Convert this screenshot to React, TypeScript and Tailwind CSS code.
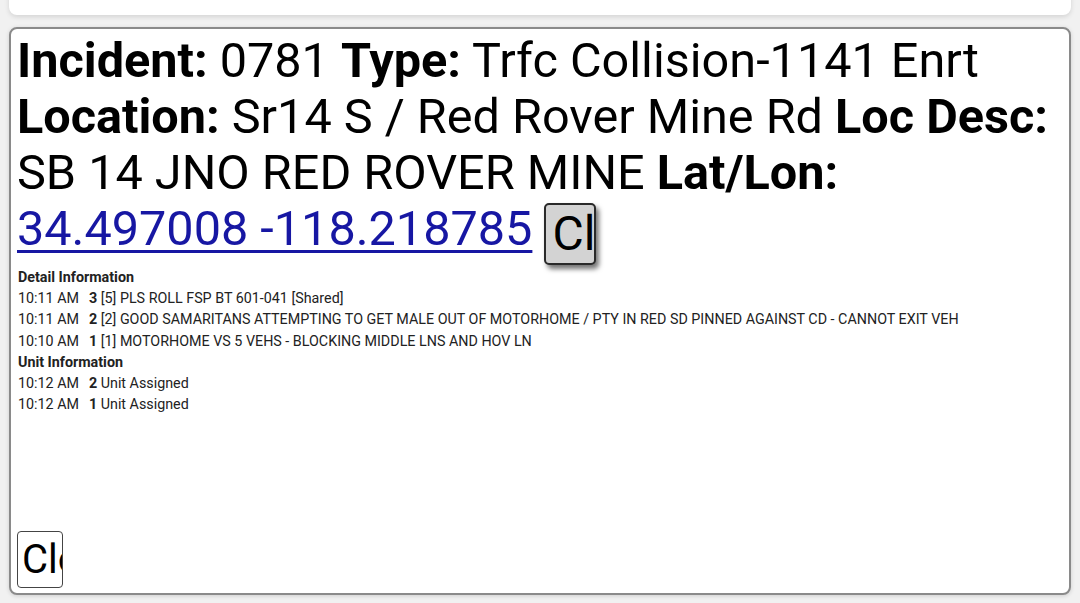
import React from 'react'

const details = [
  { time: '10:11 AM', n: '3', text: '[5] PLS ROLL FSP BT 601-041 [Shared]' },
  { time: '10:11 AM', n: '2', text: '[2] GOOD SAMARITANS ATTEMPTING TO GET MALE OUT OF MOTORHOME / PTY IN RED SD PINNED AGAINST CD - CANNOT EXIT VEH' },
  { time: '10:10 AM', n: '1', text: '[1] MOTORHOME VS 5 VEHS - BLOCKING MIDDLE LNS AND HOV LN' },
]

const units = [
  { time: '10:12 AM', n: '2', text: 'Unit Assigned' },
  { time: '10:12 AM', n: '1', text: 'Unit Assigned' },
]

function LogRow({ time, n, text }: { time: string; n: string; text: string }) {
  return (
    <div className="h-[21.2px] leading-[21px]">
      {time}
      <b className="ml-[10px] font-bold">{n}</b> {text}
    </div>
  )
}

export default function App() {
  return (
    <div
      className="h-[603px] w-[1080px] overflow-hidden bg-[#f1f1f1] text-black"
      style={{ fontFamily: 'Roboto, "Noto Sans", sans-serif' }}
    >
      {/* card above, scrolled off */}
      <div className="mx-[9px] -mt-[20px] h-[35px] rounded-lg bg-white shadow-[0_2px_5px_rgba(0,0,0,0.12)]" />

      <div className="mx-[9px] mt-[12px] flex h-[568px] flex-col rounded-lg border-2 border-[#8a8a8a] bg-white px-[6px] pb-[5px] pt-[4px] shadow-[0_1px_4px_rgba(0,0,0,0.15)]">
        <div className="text-[48.6px] leading-[56px]">
          <b>Incident:</b> 0781 <b>Type:</b> Trfc Collision-1141 Enrt <b>Location:</b> Sr14 S / Red Rover Mine Rd{' '}
          <b>Loc Desc:</b> SB 14 JNO RED ROVER MINE <b>Lat/Lon:</b>{' '}
          <a href="#" className="whitespace-nowrap text-[#1717a3] underline decoration-[3px] underline-offset-[5px]">
            34.497008 -118.218785
          </a>{' '}
          <button className="inline-block h-[62px] w-[52px] overflow-hidden whitespace-nowrap rounded-[5px] border-2 border-[#2a2a2a] bg-[#d3d3d3] pl-[6px] text-left align-[-5px] text-[48px] leading-[56px] shadow-[3px_4px_5px_rgba(0,0,0,0.55)]">
            Close
          </button>
        </div>

        <div className="mt-[2px] pl-[1px] text-[14.3px] text-[#222]">
          <div className="h-[21.2px] font-bold leading-[21px]">Detail Information</div>
          {details.map((d, i) => (
            <LogRow key={i} {...d} />
          ))}
          <div className="h-[21.2px] font-bold leading-[21px]">Unit Information</div>
          {units.map((u, i) => (
            <LogRow key={i} {...u} />
          ))}
        </div>

        <div className="mt-auto">
          <button className="h-[57px] w-[46px] overflow-hidden whitespace-nowrap rounded-[4px] border-[1.5px] border-[#444] bg-white pl-[4px] text-left text-[40px] leading-[50px]">
            Close
          </button>
        </div>
      </div>
    </div>
  )
}
